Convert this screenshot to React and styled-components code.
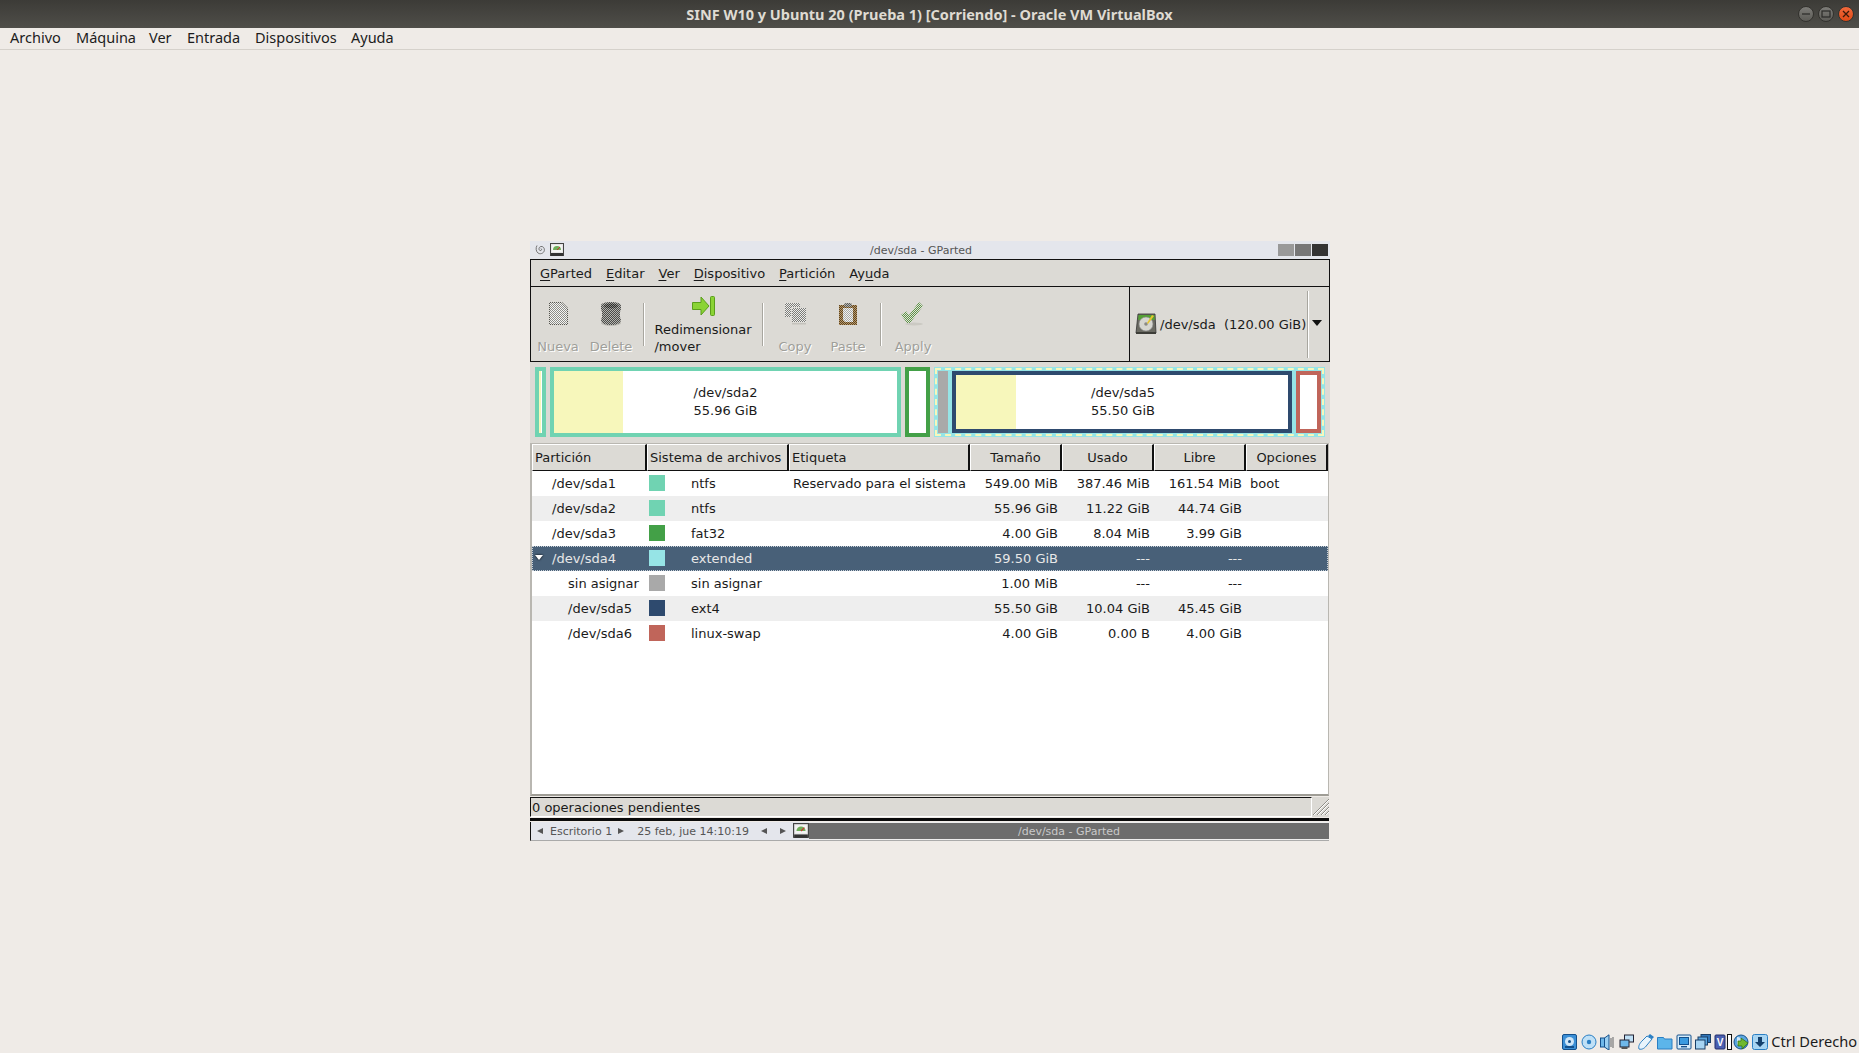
import { createGlobalStyle, styled } from 'styled-components';

const GlobalStyle = createGlobalStyle`
html, body {
  margin: 0;
  padding: 0;
  background: #efebe7;
}
`

const Screen = styled.div`
width: 1859px;
height: 1053px;
display: flex;
flex-direction: column;
overflow: hidden;
font-family: "Noto Sans", sans-serif;
`

const HostTitle = styled.div`
height: 28px;
flex: none;
position: relative;
display: flex;
align-items: center;
justify-content: center;
background: linear-gradient(#3c3b37, #4f4e49);
color: #dfdbd2;
font-weight: 700;
font-size: 14.5px;
`

const HostControls = styled.div`
position: absolute;
right: 5px;
top: 6px;
display: flex;
gap: 4px;
`

const HostControl = styled.div`
width: 16px;
height: 16px;
box-sizing: border-box;
border-radius: 50%;
background: ${({ $close }) => ($close ? 'linear-gradient(#f0693c, #df4a16)' : 'linear-gradient(#7d7c78, #5c5b56)')};
border: 0.5px solid #33322e;
display: flex;
align-items: center;
justify-content: center;
`

const HostMenu = styled.div`
height: 21px;
box-sizing: content-box;
flex: none;
display: flex;
align-items: flex-start;
line-height: 19px;
padding-left: 10px;
border-bottom: 1px solid #d5d1cb;
color: #1c1c1c;
font-size: 14.5px;
`

const HostMenuItem = styled.span`
width: ${({ $w }) => $w}px;
`

const Desktop = styled.div`
flex: 1;
padding: 191px 0 0 530px;
`

const GuestWindow = styled.div`
width: 800px;
height: 600px;
display: flex;
flex-direction: column;
font-family: "DejaVu Sans", sans-serif;
font-size: 13px;
color: #1a1a1a;
`

const WindowTitle = styled.div`
height: 18px;
flex: none;
position: relative;
padding-right: 18px;
background: #e4e6ec;
display: flex;
align-items: center;
justify-content: center;
font-size: 11px;
color: #555;
border-bottom: 1px solid #111;
`

const TitleIcons = styled.div`
position: absolute;
left: 5px;
top: 2px;
display: flex;
align-items: center;
gap: 4px;
`

const TitleButtons = styled.div`
position: absolute;
right: 2px;
top: 3px;
display: flex;
gap: 1px;
`

const TitleButton = styled.div`
width: 16px;
height: 12px;
background: ${({ $c }) => $c};
`

const MenuBar = styled.div`
height: 26px;
flex: none;
display: flex;
align-items: center;
padding-left: 9px;
gap: 14px;
background: #dcdad5;
border-left: 1px solid #111;
border-right: 1px solid #111;
border-bottom: 1px solid #111;
`

const MenuItem = styled.span`
& u {
  text-underline-offset: 2px;
}
`

const ToolRow = styled.div`
height: 74px;
flex: none;
display: flex;
background: #dcdad5;
border-left: 1px solid #111;
border-right: 1px solid #111;
border-bottom: 1px solid #111;
`

const Toolbar = styled.div`
flex: 1;
display: flex;
`

const ToolButton = styled.div`
width: ${({ $w }) => $w}px;
flex: none;
display: flex;
flex-direction: column;
align-items: center;
justify-content: space-between;
padding: ${({ $tall }) => ($tall ? '9px' : '15px')} 0 6px;
box-sizing: border-box;
`

const ToolLabel = styled.span`
line-height: 17px;
white-space: pre-line;
color: ${({ $off }) => ($off ? '#9f9f9a' : '#1a1a1a')};
text-shadow: ${({ $off }) => ($off ? '1px 1px 0 #fff' : 'none')};
`

const ToolSep = styled.div`
width: ${({ $w }) => $w}px;
flex: none;
display: flex;
justify-content: center;
padding: 16px 0 15px;
box-sizing: border-box;
&::before {
  content: '';
  width: 2px;
  background: linear-gradient(90deg, #a8a69f 50%, #fff 50%);
}
`

const DeviceBox = styled.div`
width: 200px;
flex: none;
box-sizing: border-box;
display: flex;
align-items: center;
border-left: 1px solid #111;
padding-left: 5px;
position: relative;
`

const DeviceLabel = styled.span`
margin-left: 3px;
white-space: pre;
`

const DeviceSep = styled.div`
position: absolute;
left: 177px;
top: 4px;
bottom: 3px;
width: 2px;
background: linear-gradient(90deg, #a8a69f 50%, #fff 50%);
`

const DeviceArrow = styled.div`
position: absolute;
left: 182px;
top: 33px;
border-left: 5.5px solid transparent;
border-right: 5.5px solid transparent;
border-top: 6px solid #111;
`

const GraphBar = styled.div`
height: 81px;
flex: none;
box-sizing: border-box;
background: #dcdad5;
padding: 5px 5px 6px 5px;
display: flex;
gap: 4px;
align-items: stretch;
`

const PartBox = styled.div`
width: ${({ $w }) => $w}px;
flex: none;
box-sizing: border-box;
border: 4px solid ${({ $c }) => $c};
background: #fff;
position: relative;
display: flex;
`

const UsedArea = styled.div`
width: ${({ $w }) => $w}px;
flex: none;
background: #f7f7bb;
`

const PartText = styled.div`
position: absolute;
left: 0;
right: 0;
top: 50%;
transform: translate(${({ $shift }) => $shift}px, -50%);
text-align: center;
line-height: 18px;
`

const ExtendedBox = styled.div`
width: 391px;
flex: none;
box-sizing: border-box;
background: #96e4e6;
outline: 2px dashed #f7f7bb;
outline-offset: -3px;
padding: 4px;
display: flex;
gap: 4px;
`

const FreeBox = styled.div`
width: 10px;
flex: none;
background: #a9a9a9;
`

const TreeFrame = styled.div`
flex: 1;
min-height: 0;
margin-right: 1px;
display: flex;
flex-direction: column;
background: #fff;
border: 2px solid #b9b7b1;
border-top: 1px solid #b9b7b1;
border-right: 1px solid #b9b7b1;
border-bottom: 2px solid #9f9d96;
`

const HeaderRow = styled.div`
height: 27px;
flex: none;
display: grid;
grid-template-columns: 115px 142px 181px 92px 92px 92px 1fr;
`

const HeaderCell = styled.div`
background: #dcdad5;
box-sizing: border-box;
border-top: 1px solid #fff;
border-left: 1px solid #fff;
border-right: 2px solid #111;
border-bottom: 1px solid #111;
display: flex;
align-items: center;
padding-left: ${({ $center }) => ($center ? 0 : 2)}px;
justify-content: ${({ $center }) => ($center ? 'center' : 'flex-start')};
`

const TreeRow = styled.div`
height: 25px;
flex: none;
box-sizing: border-box;
display: grid;
grid-template-columns: 115px 142px 181px 92px 92px 92px 1fr;
align-items: center;
position: relative;
background: ${({ $sel, $alt }) => ($sel ? '#486078' : $alt ? '#eeeeee' : '#fff')};
color: ${({ $sel }) => ($sel ? '#e8e8e8' : '#1a1a1a')};
outline: ${({ $sel }) => ($sel ? '1px dotted #c8d0d8' : 'none')};
outline-offset: -1px;
`

const NameCell = styled.div`
padding-left: ${({ $nested }) => ($nested ? 36 : 20)}px;
white-space: nowrap;
`

const Expander = styled.div`
position: absolute;
left: 3px;
top: 9px;
border-left: 4px solid transparent;
border-right: 4px solid transparent;
border-top: 5px solid #fff;
filter: drop-shadow(0 0 1px #000);
`

const FsCell = styled.div`
display: flex;
align-items: center;
padding-left: 2px;
`

const Swatch = styled.div`
width: 16px;
height: 16px;
flex: none;
margin-right: 26px;
margin-bottom: 1px;
background: ${({ $c }) => $c};
`

const LabelCell = styled.div`
padding-left: 4px;
white-space: nowrap;
`

const NumCell = styled.div`
text-align: right;
padding-right: 4px;
`

const FlagCell = styled.div`
padding-left: 4px;
`

const StatusBar = styled.div`
height: 20px;
flex: none;
display: flex;
background: #dcdad5;
margin: 1px 1px 0 0;
`

const StatusText = styled.div`
flex: 1;
border-top: 1px solid #111;
border-left: 1px solid #111;
border-right: 1px solid #fff;
border-bottom: 1px solid #fff;
display: flex;
align-items: center;
padding-left: 1px;
`

const Grip = styled.div`
width: 17px;
flex: none;
`

const BlackRule = styled.div`
height: 3px;
flex: none;
background: #0a0a0a;
margin: 1px 1px 0 0;
`

const Panel = styled.div`
height: 18px;
flex: none;
display: flex;
align-items: center;
margin: 1px 1px 0 0;
background: #e4e6ec;
font-size: 11px;
color: #555;
border-left: 1px solid #111;
border-bottom: 1px solid #aaa;
`

const PanelText = styled.span`
margin-left: ${({ $m }) => $m}px;
white-space: nowrap;
`

const PanelArrow = styled.span`
width: 0;
height: 0;
margin-left: ${({ $m }) => $m}px;
border-top: 3.5px solid transparent;
border-bottom: 3.5px solid transparent;
${({ $right }) => ($right ? 'border-left: 6px solid #555;' : 'border-right: 6px solid #555;')}
`

const PanelIcon = styled.div`
margin-left: 7px;
width: 16px;
height: 16px;
flex: none;
`

const TaskButton = styled.div`
flex: 1;
align-self: stretch;
background: #6d6d6d;
color: #c9c9c9;
display: flex;
align-items: center;
justify-content: center;
border-top: 1px solid #eee;
border-bottom: 1px solid #eee;
`

const HostStatus = styled.div`
height: 21px;
flex: none;
display: flex;
align-items: flex-start;
line-height: 19px;
justify-content: flex-end;
padding-right: 2px;
color: #1c1c1c;
font-size: 14.6px;
`

const StatusIconCell = styled.div`
width: 19px;
height: 16px;
margin-top: 2px;
display: flex;
justify-content: flex-start;
`

const HostKey = styled.span`
margin-left: 0;
`

/* stippled icons, the gtk2 look of a disabled toolbar button */
const Stipple = ({ id, c, bg = '#dcdad5' }) => (
    <pattern id={id} width="2" height="2" patternUnits="userSpaceOnUse">
        <rect width="2" height="2" fill={bg} />
        <rect width="1" height="1" fill={c} />
        <rect x="1" y="1" width="1" height="1" fill={c} />
    </pattern>
)

const NewIcon = () => (
    <svg width="24" height="24" viewBox="0 0 24 24">
        <defs><Stipple id="st-new" c="#8c8c88" bg="#f6f6f4" /><Stipple id="st-edge" c="#55554f" bg="#dcdad5" /></defs>
        <path d="M3 0h13l6 6v17H3z" fill="url(#st-edge)" />
        <path d="M4 1h11.500l5.500 5.500V22H4z" fill="url(#st-new)" />
    </svg>
)

const DeleteIcon = () => (
    <svg width="24" height="24" viewBox="0 0 24 24">
        <defs><Stipple id="st-del" c="#4a4a48" bg="#b5b5b0" /><Stipple id="st-deltop" c="#2c2c2a" bg="#8a8a86" /></defs>
        <ellipse cx="12" cy="21" rx="10" ry="3" fill="#bdbbb5" />
        <path d="M2 4c0-3 4-4 10-4s10 1 10 4v3l-1 3v5l1 3c0 3-4 5-10 5S2 21 2 18l1-3v-5L2 7z" fill="url(#st-del)" />
        <ellipse cx="12" cy="4" rx="7" ry="2.500" fill="url(#st-deltop)" />
    </svg>
)

const CopyIcon = () => (
    <svg width="24" height="24" viewBox="0 0 24 24">
        <defs><Stipple id="st-copy" c="#7c7c78" bg="#ececea" /></defs>
        <rect x="2" y="1" width="15" height="14" fill="url(#st-copy)" />
        <rect x="8" y="5" width="15" height="15" fill="#dcdad5" />
        <rect x="9" y="6" width="14" height="14" fill="url(#st-copy)" />
        <rect x="9" y="21" width="14" height="1.500" fill="#c4c2bc" />
    </svg>
)

const PasteIcon = () => (
    <svg width="24" height="24" viewBox="0 0 24 24">
        <defs><Stipple id="st-paste" c="#5e4420" bg="#b89a6c" /><Stipple id="st-paper" c="#a8a8a4" bg="#f2f2f0" /><Stipple id="st-clip" c="#5a5a56" bg="#b5b5b0" /></defs>
        <rect x="3" y="3" width="18" height="20" fill="url(#st-paste)" />
        <path d="M7 6h10v14H9l-2-2z" fill="url(#st-paper)" />
        <rect x="8" y="1" width="8" height="4" rx="2" fill="url(#st-clip)" />
    </svg>
)

const ApplyIcon = () => (
    <svg width="24" height="24" viewBox="0 0 24 24">
        <defs><Stipple id="st-apply" c="#5e8f48" bg="#dfe6d8" /></defs>
        <ellipse cx="13" cy="22" rx="9" ry="1.500" fill="#cbc9c3" />
        <path d="M0 13l5-4 3 4L18 0l4 4L9 21H6z" fill="url(#st-apply)" />
    </svg>
)

const ResizeIcon = () => (
    <svg width="23" height="20" viewBox="0 0 23 20">
        <path d="M.5 6.500h8.500V1l8 9-8 9v-5.500H.5z" fill="#8ad335" stroke="#5a9e1c" strokeWidth="1" />
        <rect x="18.500" y="0.500" width="4" height="19" rx="1" fill="#8ad335" stroke="#5a9e1c" strokeWidth="1" />
    </svg>
)

const GpartedIcon = ({ size = 14 }) => (
    <svg width={size} height={size} viewBox="0 0 14 14">
        <rect x="0.5" y="0.5" width="13" height="12" fill="#e6e6e6" stroke="#444" />
        <rect x="2" y="2" width="10" height="7" fill="#f4f4f4" />
        <path d="M3 7a4 4 0 0 1 8 0z" fill="#6fae5a" />
        <path d="M7 7l3-3" stroke="#c33" strokeWidth="1" />
        <rect x="1" y="10" width="12" height="3" fill="#333" />
    </svg>
)

const DebianSwirl = () => (
    <svg width="11" height="14" viewBox="0 0 11 14">
        <path d="M6 5.500a1 1 0 0 1-1 2C3.500 7 3.500 4 6 3.500c3-.3 4 3 3 5s-4 3-6 1.500S.5 5 2 2.500" fill="none" stroke="#666" strokeWidth="0.9" />
    </svg>
)

const DiskIcon = () => (
    <svg width="22" height="22" viewBox="0 0 22 22">
        <path d="M3 1h17l1 19H1z" fill="#6a6a62" stroke="#333" strokeWidth="0.8" />
        <path d="M3.500 2h16l.3 5H3.200z" fill="#55a035" />
        <circle cx="11" cy="11" r="7" fill="#d6d6d0" stroke="#888" strokeWidth="0.6" />
        <circle cx="11" cy="11" r="1.800" fill="#8a8a84" />
        <path d="M12 10l5-8 2 1-6 8z" fill="#e6c62e" />
        <rect x="1" y="19" width="20" height="2" fill="#3d3d38" />
    </svg>
)

const Grippy = () => (
    <svg width="17" height="19" viewBox="0 0 17 19">
        <path d="M17 2L1 18M17 6L5 18M17 10L9 18M17 14L13 18" stroke="#8f8d87" strokeWidth="1" />
        <path d="M17 3L2 18M17 7L6 18M17 11L10 18M17 15L14 18" stroke="#fff" strokeWidth="1" />
    </svg>
)

const HostIcons = [
    <g key="hd"><rect x="0.5" y="0.5" width="14" height="15" rx="1.5" fill="#3b8fd6" stroke="#14508c" /><circle cx="7.5" cy="7.5" r="4.5" fill="#cfe6f8" /><circle cx="7.5" cy="7.5" r="1.5" fill="#14508c" /><rect x="3" y="12" width="9" height="2" fill="#14508c" /></g>,
    <g key="cd"><circle cx="8" cy="8" r="7" fill="#bfe0f6" stroke="#2a7fc4" /><circle cx="8" cy="8" r="2.2" fill="#2a7fc4" /></g>,
    <g key="au"><rect x="0.5" y="4" width="4" height="9" fill="#6fb8ea" stroke="#14508c" /><path d="M4.500 4L9 .8v15.400L4.500 13z" fill="#9cd0f2" stroke="#14508c" /><path d="M11 4v9M13 3v11" stroke="#8a8a8a" strokeWidth="1.4" /></g>,
    <g key="net"><rect x="5.5" y="1" width="9" height="7" fill="#bfe0f6" stroke="#223" /><rect x="1" y="6" width="9" height="7" fill="#6fb8ea" stroke="#223" /><rect x="2.5" y="13" width="6" height="2" fill="#555" /></g>,
    <g key="usb"><path d="M1 15c-1-3 1-6 3-8l5-5 5 3-5 6c-2 3-5 5-8 4z" fill="#e8f4fc" stroke="#2a7fc4" /><path d="M10 2l2-2 4 3-2 2z" fill="#2a7fc4" /></g>,
    <g key="fo"><path d="M.5 3.500h6l1 1.500h7.500v10H.5z" fill="#5cb5ea" stroke="#2a7fc4" /></g>,
    <g key="di"><rect x="1" y="1" width="14" height="14" rx="1" fill="#d6ecfa" stroke="#14508c" /><rect x="3.5" y="3.5" width="9" height="7" fill="#3b9be0" stroke="#14508c" /><rect x="5" y="12" width="6" height="1.4" fill="#14508c" /></g>,
    <g key="mu"><rect x="6" y="0.5" width="9.5" height="8" fill="#2f74b8" stroke="#1a3f66" /><rect x="3" y="3" width="9.5" height="8" fill="#5aa5de" stroke="#1a3f66" /><rect x="0.5" y="6" width="9.5" height="9" fill="#a7d4f2" stroke="#1a3f66" /></g>,
    <g key="vt"><rect x="1" y="1" width="10" height="14" rx="1" fill="#4a5fb0" stroke="#232f6a" /><text x="6" y="12" fontSize="10" fontWeight="700" textAnchor="middle" fill="#fff" fontFamily="Liberation Sans">V</text><rect x="13.5" y="0.5" width="4" height="15" fill="#fff" stroke="#111" /></g>,
    <g key="gl"><circle cx="8" cy="8" r="7" fill="#5aa5de" stroke="#14508c" /><path d="M4 3c3 0 5 2 5 4s-3 2-5 4" fill="#cfe6f8" /><path d="M8 4l7 5-6 6v-3H5V7h3z" fill="#6fb82f" stroke="#2f6a10" strokeWidth="0.7" /></g>,
    <g key="dl"><rect x="0.5" y="0.5" width="15" height="15" rx="2" fill="#a7d4f2" stroke="#2a7fc4" /><path d="M6 3h4v5h3l-5 5-5-5h3z" fill="#14406c" /></g>,
]

const partitions = [
    { name: '/dev/sda1', c: '#70d3b2', fs: 'ntfs', label: 'Reservado para el sistema', size: '549.00 MiB', used: '387.46 MiB', free: '161.54 MiB', flag: 'boot' },
    { name: '/dev/sda2', c: '#70d3b2', fs: 'ntfs', size: '55.96 GiB', used: '11.22 GiB', free: '44.74 GiB' },
    { name: '/dev/sda3', c: '#43a047', fs: 'fat32', size: '4.00 GiB', used: '8.04 MiB', free: '3.99 GiB' },
    { name: '/dev/sda4', c: '#96e4e6', fs: 'extended', size: '59.50 GiB', used: '---', free: '---', sel: true },
    { name: 'sin asignar', c: '#a9a9a9', fs: 'sin asignar', size: '1.00 MiB', used: '---', free: '---', nested: true },
    { name: '/dev/sda5', c: '#2e4a6e', fs: 'ext4', size: '55.50 GiB', used: '10.04 GiB', free: '45.45 GiB', nested: true },
    { name: '/dev/sda6', c: '#c0655a', fs: 'linux-swap', size: '4.00 GiB', used: '0.00 B', free: '4.00 GiB', nested: true },
]

export default function App () {
    return (
        <>
            <GlobalStyle />
            <Screen>
                <HostTitle>
                    SINF W10 y Ubuntu 20 (Prueba 1) [Corriendo] - Oracle VM VirtualBox
                    <HostControls>
                        <HostControl><svg width="10" height="10"><path d="M1 5h8" stroke="#2b2b28" strokeWidth="1.2" /></svg></HostControl>
                        <HostControl><svg width="10" height="10"><rect x="1" y="2" width="8" height="6" fill="none" stroke="#2b2b28" strokeWidth="1.2" /></svg></HostControl>
                        <HostControl $close><svg width="10" height="10"><path d="M2 2l6 6M8 2l-6 6" stroke="#3a1a0a" strokeWidth="1.3" /></svg></HostControl>
                    </HostControls>
                </HostTitle>
                <HostMenu>
                    <HostMenuItem $w={66}>Archivo</HostMenuItem>
                    <HostMenuItem $w={73}>Máquina</HostMenuItem>
                    <HostMenuItem $w={38}>Ver</HostMenuItem>
                    <HostMenuItem $w={68}>Entrada</HostMenuItem>
                    <HostMenuItem $w={96}>Dispositivos</HostMenuItem>
                    <HostMenuItem $w={60}>Ayuda</HostMenuItem>
                </HostMenu>
                <Desktop>
                    <GuestWindow>
                        <WindowTitle>
                            <TitleIcons><DebianSwirl /><GpartedIcon /></TitleIcons>
                            /dev/sda - GParted
                            <TitleButtons>
                                <TitleButton $c="#999" />
                                <TitleButton $c="#777" />
                                <TitleButton $c="#333" />
                            </TitleButtons>
                        </WindowTitle>
                        <MenuBar>
                            <MenuItem><u>G</u>Parted</MenuItem>
                            <MenuItem><u>E</u>ditar</MenuItem>
                            <MenuItem><u>V</u>er</MenuItem>
                            <MenuItem><u>D</u>ispositivo</MenuItem>
                            <MenuItem><u>P</u>artición</MenuItem>
                            <MenuItem>Ay<u>u</u>da</MenuItem>
                        </MenuBar>
                        <ToolRow>
                            <Toolbar>
                                <ToolButton $w={54}><NewIcon /><ToolLabel $off>Nueva</ToolLabel></ToolButton>
                                <ToolButton $w={52}><DeleteIcon /><ToolLabel $off>Delete</ToolLabel></ToolButton>
                                <ToolSep $w={14} />
                                <ToolButton $w={104} $tall><ResizeIcon /><ToolLabel>{'Redimensionar\n/mover'}</ToolLabel></ToolButton>
                                <ToolSep $w={16} />
                                <ToolButton $w={48}><CopyIcon /><ToolLabel $off>Copy</ToolLabel></ToolButton>
                                <ToolButton $w={58}><PasteIcon /><ToolLabel $off>Paste</ToolLabel></ToolButton>
                                <ToolSep $w={8} />
                                <ToolButton $w={56}><ApplyIcon /><ToolLabel $off>Apply</ToolLabel></ToolButton>
                            </Toolbar>
                            <DeviceBox>
                                <DiskIcon />
                                <DeviceLabel>/dev/sda  (120.00 GiB)</DeviceLabel>
                                <DeviceSep />
                                <DeviceArrow />
                            </DeviceBox>
                        </ToolRow>
                        <GraphBar>
                            <PartBox $w={11} $c="#70d3b2"><UsedArea $w={2} /></PartBox>
                            <PartBox $w={351} $c="#70d3b2">
                                <UsedArea $w={69} />
                                <PartText $shift={0}>/dev/sda2<br />55.96 GiB</PartText>
                            </PartBox>
                            <PartBox $w={25} $c="#43a047" />
                            <ExtendedBox>
                                <FreeBox />
                                <PartBox $w={340} $c="#2e4a6e">
                                    <UsedArea $w={60} />
                                    <PartText $shift={1}>/dev/sda5<br />55.50 GiB</PartText>
                                </PartBox>
                                <PartBox $w={25} $c="#c0655a" />
                            </ExtendedBox>
                        </GraphBar>
                        <TreeFrame>
                            <HeaderRow>
                                <HeaderCell>Partición</HeaderCell>
                                <HeaderCell>Sistema de archivos</HeaderCell>
                                <HeaderCell>Etiqueta</HeaderCell>
                                <HeaderCell $center>Tamaño</HeaderCell>
                                <HeaderCell $center>Usado</HeaderCell>
                                <HeaderCell $center>Libre</HeaderCell>
                                <HeaderCell $center>Opciones</HeaderCell>
                            </HeaderRow>
                            {partitions.map((p, index) => (
                                <TreeRow key={p.name} $sel={p.sel} $alt={index % 2 === 1}>
                                    {p.sel ? <Expander /> : ''}
                                    <NameCell $nested={p.nested}>{p.name}</NameCell>
                                    <FsCell><Swatch $c={p.c} />{p.fs}</FsCell>
                                    <LabelCell>{p.label}</LabelCell>
                                    <NumCell>{p.size}</NumCell>
                                    <NumCell>{p.used}</NumCell>
                                    <NumCell>{p.free}</NumCell>
                                    <FlagCell>{p.flag}</FlagCell>
                                </TreeRow>
                            ))}
                        </TreeFrame>
                        <StatusBar>
                            <StatusText>0 operaciones pendientes</StatusText>
                            <Grip><Grippy /></Grip>
                        </StatusBar>
                        <BlackRule />
                        <Panel>
                            <PanelArrow $m={6} />
                            <PanelText $m={7}>Escritorio 1</PanelText>
                            <PanelArrow $m={6} $right />
                            <PanelText $m={13}>25 feb, jue 14:10:19</PanelText>
                            <PanelArrow $m={12} />
                            <PanelArrow $m={13} $right />
                            <PanelIcon><GpartedIcon size={16} /></PanelIcon>
                            <TaskButton>/dev/sda - GParted</TaskButton>
                        </Panel>
                    </GuestWindow>
                </Desktop>
                <HostStatus>
                    {HostIcons.map((icon) => (
                        <StatusIconCell key={icon.key}>
                            <svg width="18" height="16" viewBox="0 0 18 16">{icon}</svg>
                        </StatusIconCell>
                    ))}
                    <HostKey>Ctrl Derecho</HostKey>
                </HostStatus>
            </Screen>
        </>
    )
}
